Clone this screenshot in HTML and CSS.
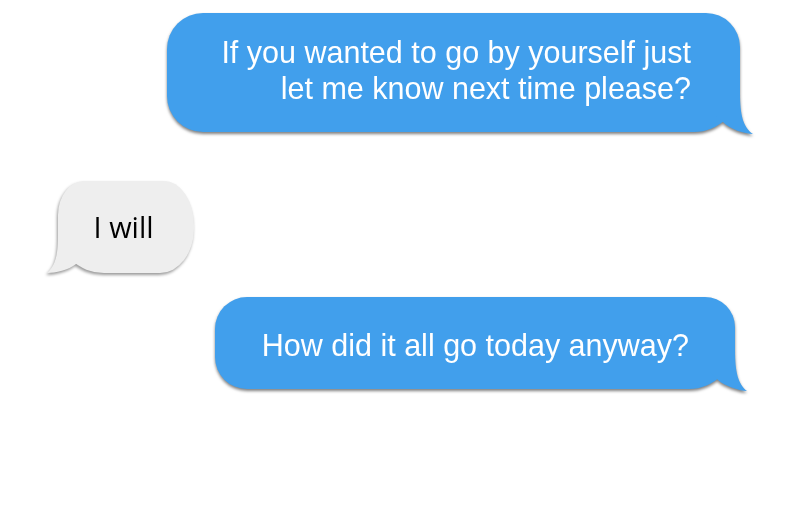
FILE: index.html
```html
<!DOCTYPE html>
<html lang="en">
<head>
<meta charset="utf-8">
<title>Messages</title>
<link rel="stylesheet" href="styles.css">
</head>
<body>
<main class="thread">
  <div class="row row-sent row-first">
    <div class="bubble bubble-blue bubble-long">If you wanted to go by yourself just<br>let me know next time please?<svg class="tail tail-right" viewBox="0 0 40 50" aria-hidden="true"><path d="M25 0 L25 8 C25 30 28 42 38 49 C30 49 14 44 8 37 L0 30 L0 0 Z"/></svg></div>
  </div>
  <div class="row row-received">
    <div class="bubble bubble-grey">I will<svg class="tail tail-left" viewBox="0 0 40 50" aria-hidden="true"><path d="M15 0 L15 10 C15 30 12 40 4 47 C12 47 26 44 33 38 L40 30 L40 0 Z"/></svg></div>
  </div>
  <div class="row row-sent row-last">
    <div class="bubble bubble-blue bubble-short">How did it all go today anyway?<svg class="tail tail-right" viewBox="0 0 40 50" aria-hidden="true"><path d="M25 0 L25 8 C25 30 28 42 37 49 C30 49 14 44 8 38 L0 30 L0 0 Z"/></svg></div>
  </div>
</main>
</body>
</html>
```

FILE: styles.css
```css
html, body {
  margin: 0;
  padding: 0;
  background: #ffffff;
}

.thread {
  display: flex;
  flex-direction: column;
  padding-top: 13px;
  padding-bottom: 20px;
}

.row {
  display: flex;
  padding-bottom: 6px;
}

.row-sent {
  justify-content: flex-end;
}

.row-first {
  padding-right: 60px;
}

.row-received {
  justify-content: flex-start;
  padding-left: 58px;
  margin-top: 43px;
}

.row-last {
  padding-right: 65px;
  margin-top: 18px;
}

.bubble {
  position: relative;
  white-space: nowrap;
}

.bubble-blue {
  background: #419fec;
  color: #ffffff;
  font-family: "Liberation Sans", Arial, sans-serif;
  font-size: 30.5px;
  line-height: 35.5px;
  text-align: right;
  filter: drop-shadow(0 2px 1.5px rgba(0, 0, 0, 0.5));
}

.bubble-blue .tail path {
  fill: #419fec;
}

.bubble-long {
  padding: 22px 49px 26px 54px;
  border-radius: 36px 34px 46px 36px;
}

.bubble-short {
  padding: 31px 46px 25px 47px;
  border-radius: 32px 30px 46px 32px;
}

.bubble-grey {
  background: #eeeeee;
  color: #000000;
  font-family: "Open Sans", "DejaVu Sans", sans-serif;
  font-size: 29px;
  font-weight: 500;
  line-height: 36px;
  padding: 28px 40.5px 28px 35.5px;
  border-radius: 26px 30px 34px 46px / 34px 44px 44px 44px;
  filter: drop-shadow(-1px 2px 1.5px rgba(0, 0, 0, 0.4));
}

.bubble-grey .tail path {
  fill: #eeeeee;
}

.tail {
  position: absolute;
  width: 40px;
  height: 50px;
  bottom: -3px;
  overflow: visible;
}

.tail-right {
  right: -15px;
}

.tail-left {
  left: -15px;
}
```
